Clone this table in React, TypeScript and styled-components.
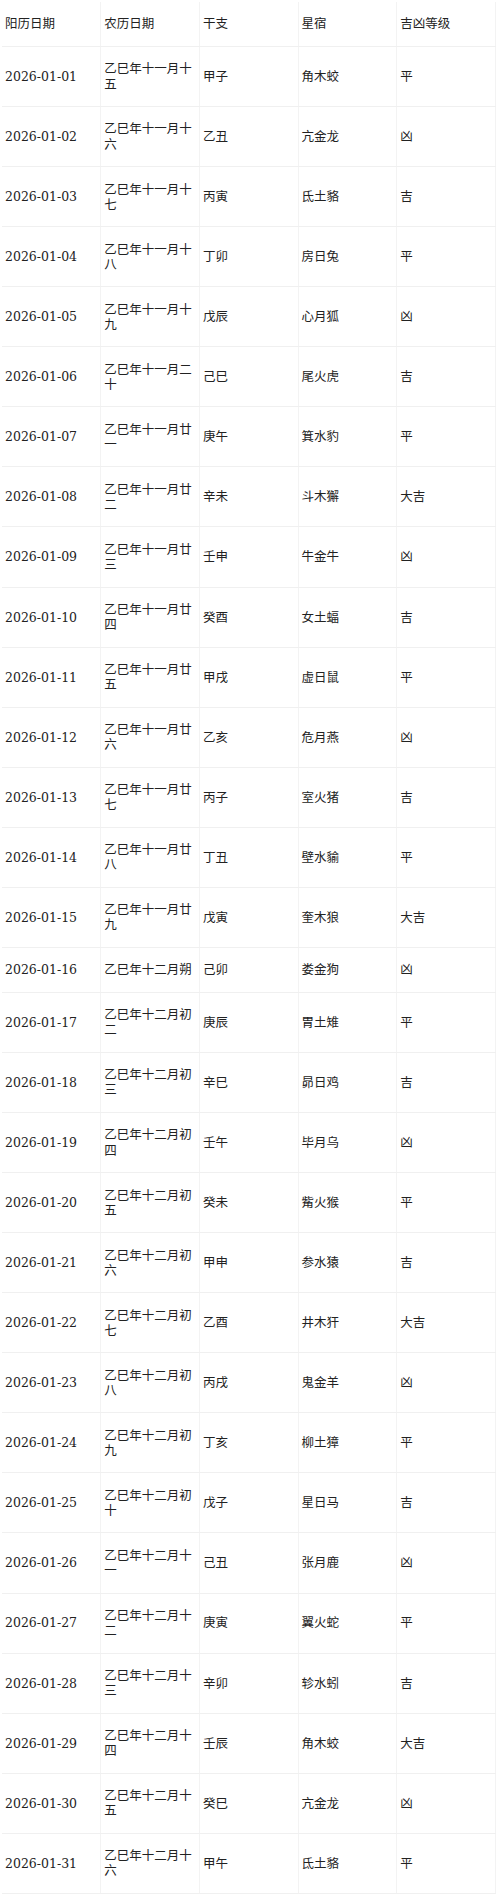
import React from "react";
import styled, { createGlobalStyle } from "styled-components";

const GlobalStyle = createGlobalStyle`
  html, body {
    margin: 0;
    padding: 0;
    background: #ffffff;
  }
  body {
    font-family: "DejaVu Serif", "Noto Sans CJK SC", serif;
    color: #222222;
  }
`;

const Page = styled.div`
  padding: 2px 0 2px 2px;
`;

const Table = styled.table`
  width: 494px;
  table-layout: fixed;
  border-collapse: collapse;
  font-family: "DejaVu Serif", "Noto Sans CJK SC", serif;
  font-size: 12.5px;
  line-height: 15.1px;
  color: #222222;
`;

const HeadCell = styled.th`
  text-align: left;
  font-weight: normal;
  vertical-align: middle;
  padding: 14.45px 3px 14.45px 3px;
  border-bottom: 1px solid #f0f0f0;
  border-right: 1px solid #f3f3f3;
  &:first-child {
    padding-left: 3px;
  }
`;

const Cell = styled.td`
  text-align: left;
  vertical-align: middle;
  padding: 14.45px 3px 14.45px 3px;
  border-bottom: 1px solid #f0f0f0;
  border-right: 1px solid #f3f3f3;
  word-break: break-all;
`;

type Row = [string, string, string, string, string];

const rows: Row[] = [
  ["2026-01-01", "乙巳年十一月十五", "甲子", "角木蛟", "平"],
  ["2026-01-02", "乙巳年十一月十六", "乙丑", "亢金龙", "凶"],
  ["2026-01-03", "乙巳年十一月十七", "丙寅", "氐土貉", "吉"],
  ["2026-01-04", "乙巳年十一月十八", "丁卯", "房日兔", "平"],
  ["2026-01-05", "乙巳年十一月十九", "戊辰", "心月狐", "凶"],
  ["2026-01-06", "乙巳年十一月二十", "己巳", "尾火虎", "吉"],
  ["2026-01-07", "乙巳年十一月廿一", "庚午", "箕水豹", "平"],
  ["2026-01-08", "乙巳年十一月廿二", "辛未", "斗木獬", "大吉"],
  ["2026-01-09", "乙巳年十一月廿三", "壬申", "牛金牛", "凶"],
  ["2026-01-10", "乙巳年十一月廿四", "癸酉", "女土蝠", "吉"],
  ["2026-01-11", "乙巳年十一月廿五", "甲戌", "虚日鼠", "平"],
  ["2026-01-12", "乙巳年十一月廿六", "乙亥", "危月燕", "凶"],
  ["2026-01-13", "乙巳年十一月廿七", "丙子", "室火猪", "吉"],
  ["2026-01-14", "乙巳年十一月廿八", "丁丑", "壁水貐", "平"],
  ["2026-01-15", "乙巳年十一月廿九", "戊寅", "奎木狼", "大吉"],
  ["2026-01-16", "乙巳年十二月朔", "己卯", "娄金狗", "凶"],
  ["2026-01-17", "乙巳年十二月初二", "庚辰", "胃土雉", "平"],
  ["2026-01-18", "乙巳年十二月初三", "辛巳", "昴日鸡", "吉"],
  ["2026-01-19", "乙巳年十二月初四", "壬午", "毕月乌", "凶"],
  ["2026-01-20", "乙巳年十二月初五", "癸未", "觜火猴", "平"],
  ["2026-01-21", "乙巳年十二月初六", "甲申", "参水猿", "吉"],
  ["2026-01-22", "乙巳年十二月初七", "乙酉", "井木犴", "大吉"],
  ["2026-01-23", "乙巳年十二月初八", "丙戌", "鬼金羊", "凶"],
  ["2026-01-24", "乙巳年十二月初九", "丁亥", "柳土獐", "平"],
  ["2026-01-25", "乙巳年十二月初十", "戊子", "星日马", "吉"],
  ["2026-01-26", "乙巳年十二月十一", "己丑", "张月鹿", "凶"],
  ["2026-01-27", "乙巳年十二月十二", "庚寅", "翼火蛇", "平"],
  ["2026-01-28", "乙巳年十二月十三", "辛卯", "轸水蚓", "吉"],
  ["2026-01-29", "乙巳年十二月十四", "壬辰", "角木蛟", "大吉"],
  ["2026-01-30", "乙巳年十二月十五", "癸巳", "亢金龙", "凶"],
  ["2026-01-31", "乙巳年十二月十六", "甲午", "氐土貉", "平"],
];

const headers = ["阳历日期", "农历日期", "干支", "星宿", "吉凶等级"];

export default function App() {
  return (
    <>
      <GlobalStyle />
      <Page>
        <Table>
          <thead>
            <tr>
              {headers.map((h) => (
                <HeadCell key={h}>{h}</HeadCell>
              ))}
            </tr>
          </thead>
          <tbody>
            {rows.map((r) => (
              <tr key={r[0]}>
                {r.map((c, i) => (
                  <Cell key={i}>{c}</Cell>
                ))}
              </tr>
            ))}
          </tbody>
        </Table>
      </Page>
    </>
  );
}
